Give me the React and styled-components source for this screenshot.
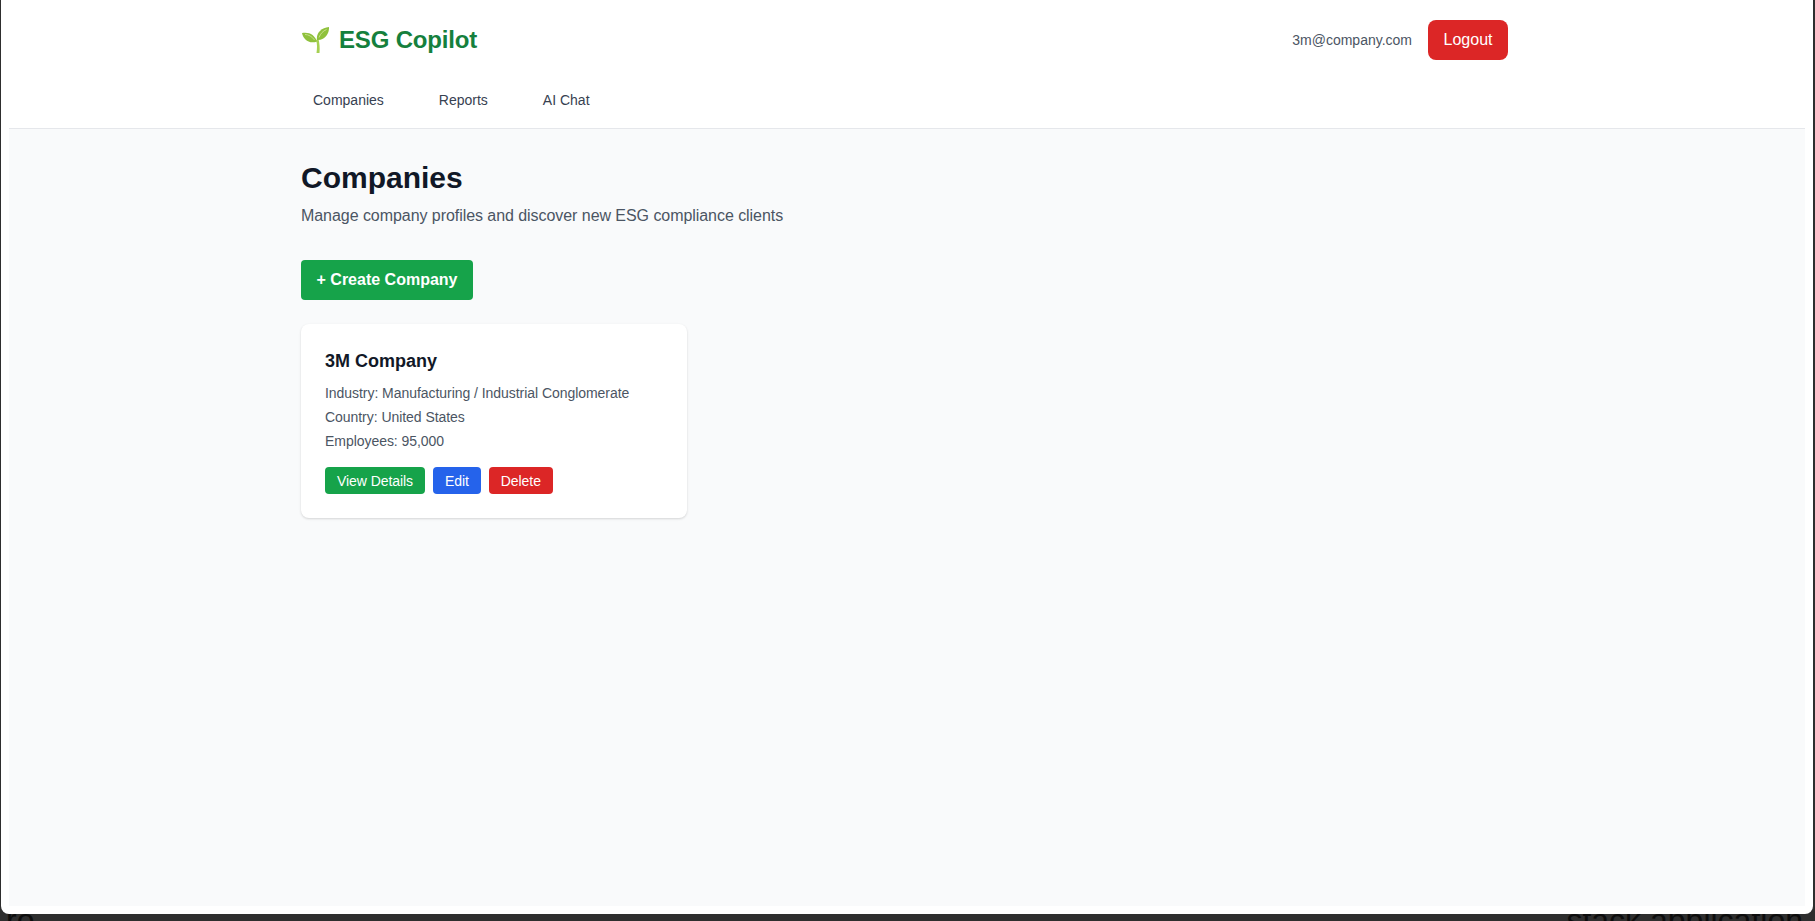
import React from "react";
import styled, { createGlobalStyle } from "styled-components";

const GlobalStyle = createGlobalStyle`
  html, body {
    margin: 0;
    height: 100%;
    overflow: hidden;
    background: #2e2e2e;
    font-family: "Liberation Sans", Arial, sans-serif;
  }
`;

const SeedlingIcon = () => (
  <svg width="28" height="28" viewBox="0 0 28 28">
    <path d="M15 14 C16.5 18 16 23 15.5 27 L18.5 27 C19 22 18.5 17 17.5 13 Z" fill="#a6d052" />
    <path d="M16 15.5 C14 9 8 5.5 1 7 C2 13 8 18.5 16 15.5 Z" fill="#8fc13c" />
    <path d="M16 14 C15 7 20 2 28 1 C28.5 8 23 15 16 14 Z" fill="#8fc13c" />
    <path d="M4 8.5 C7.5 8.5 11 10.5 13.5 14" stroke="#c5e08a" strokeWidth="1" fill="none" />
    <path d="M25.5 3.5 C22 5 19.5 7.5 18 11.5" stroke="#c5e08a" strokeWidth="1" fill="none" />
  </svg>
);

const App = () => {
  return (
    <>
      <GlobalStyle />
      <Frame>
        <Page>
          <Header>
            <HeaderInner>
              <TopRow>
                <Logo>
                  <SeedlingIcon />
                  <LogoText>ESG Copilot</LogoText>
                </Logo>
                <UserArea>
                  <UserEmail>3m@company.com</UserEmail>
                  <LogoutButton>Logout</LogoutButton>
                </UserArea>
              </TopRow>
              <Nav>
                <NavLink>Companies</NavLink>
                <NavLink>Reports</NavLink>
                <NavLink>AI Chat</NavLink>
              </Nav>
            </HeaderInner>
          </Header>
          <Main>
            <Title>Companies</Title>
            <Subtitle>Manage company profiles and discover new ESG compliance clients</Subtitle>
            <CreateButton>+ Create Company</CreateButton>
            <Card>
              <CardTitle>3M Company</CardTitle>
              <CardLine>Industry: Manufacturing / Industrial Conglomerate</CardLine>
              <CardLine>Country: United States</CardLine>
              <CardLine>Employees: 95,000</CardLine>
              <CardActions>
                <ActionButton color="#16a34a">View Details</ActionButton>
                <ActionButton color="#2563eb">Edit</ActionButton>
                <ActionButton color="#dc2626">Delete</ActionButton>
              </CardActions>
            </Card>
          </Main>
        </Page>
      </Frame>
      <Behind>
        <BehindText>ro</BehindText>
        <BehindText>stack application</BehindText>
      </Behind>
    </>
  );
};

const Frame = styled.div`
  height: 914px;
  margin: 0 2px 0 1px;
  padding: 0 8px 8px 8px;
  box-sizing: border-box;
  background: white;
  border-radius: 0 0 8px 8px;
`;

const Page = styled.div`
  height: 100%;
  background-color: #f9fafb;
  display: flex;
  flex-direction: column;
`;

const Header = styled.header`
  height: 129px;
  box-sizing: border-box;
  background: white;
  border-bottom: 1px solid #e5e7eb;
`;

const HeaderInner = styled.div`
  width: 1207px;
  margin-left: 292px;
`;

const TopRow = styled.div`
  display: flex;
  justify-content: space-between;
  align-items: center;
  height: 79px;
`;

const Logo = styled.div`
  display: flex;
  align-items: center;
  gap: 10px;
`;

const LogoText = styled.span`
  color: #15803d;
  font-size: 24px;
  font-weight: 700;
  letter-spacing: -0.17px;
`;

const UserArea = styled.div`
  display: flex;
  align-items: center;
  gap: 16px;
`;

const UserEmail = styled.span`
  color: #4b5563;
  font-size: 14px;
`;

const LogoutButton = styled.button`
  width: 80px;
  height: 40px;
  border: none;
  border-radius: 8px;
  background: #dc2626;
  color: white;
  font-family: inherit;
  font-size: 16px;
`;

const Nav = styled.nav`
  display: flex;
  gap: 55px;
  padding-left: 12px;
  padding-top: 11px;
`;

const NavLink = styled.a`
  color: #374151;
  font-size: 14px;
  line-height: 20px;
`;

const Main = styled.main`
  padding: 0 0 0 292px;
`;

const Title = styled.h1`
  margin: 31px 0 0;
  color: #111827;
  font-size: 30px;
  line-height: 36px;
  font-weight: 700;
`;

const Subtitle = styled.p`
  margin: 8px 0 0;
  color: #4b5563;
  font-size: 16px;
  line-height: 24px;
  letter-spacing: -0.055px;
`;

const CreateButton = styled.button`
  display: block;
  margin-top: 32px;
  width: 172px;
  height: 40px;
  border: none;
  border-radius: 4px;
  background: #16a34a;
  color: white;
  font-family: inherit;
  font-size: 16px;
  font-weight: 700;
`;

const Card = styled.div`
  margin-top: 24px;
  width: 386px;
  height: 194px;
  box-sizing: border-box;
  padding: 23px 24px;
  background: white;
  border-radius: 8px;
  box-shadow: 0 1px 3px rgba(0, 0, 0, 0.1), 0 1px 2px rgba(0, 0, 0, 0.06);
`;

const CardTitle = styled.h3`
  margin: 0 0 8px;
  color: #111827;
  font-size: 18px;
  line-height: 28px;
  font-weight: 700;
`;

const CardLine = styled.p`
  margin: 0 0 4px;
  color: #4b5563;
  font-size: 14px;
  line-height: 20px;
  letter-spacing: -0.047px;
`;

const CardActions = styled.div`
  display: flex;
  gap: 8px;
  margin-top: 16px;
`;

const ActionButton = styled.button`
  height: 27px;
  padding: 0 12px;
  border: none;
  border-radius: 4px;
  background: ${(props) => props.color};
  color: white;
  font-family: inherit;
  font-size: 14px;
  letter-spacing: -0.07px;
`;

const Behind = styled.div`
  height: 7px;
  overflow: hidden;
  display: flex;
  justify-content: space-between;
  padding: 0 12px 0 6px;
`;

const BehindText = styled.span`
  margin-top: -10px;
  color: #0d0d0d;
  font-size: 32px;
  line-height: 32px;
`;

export default App;
